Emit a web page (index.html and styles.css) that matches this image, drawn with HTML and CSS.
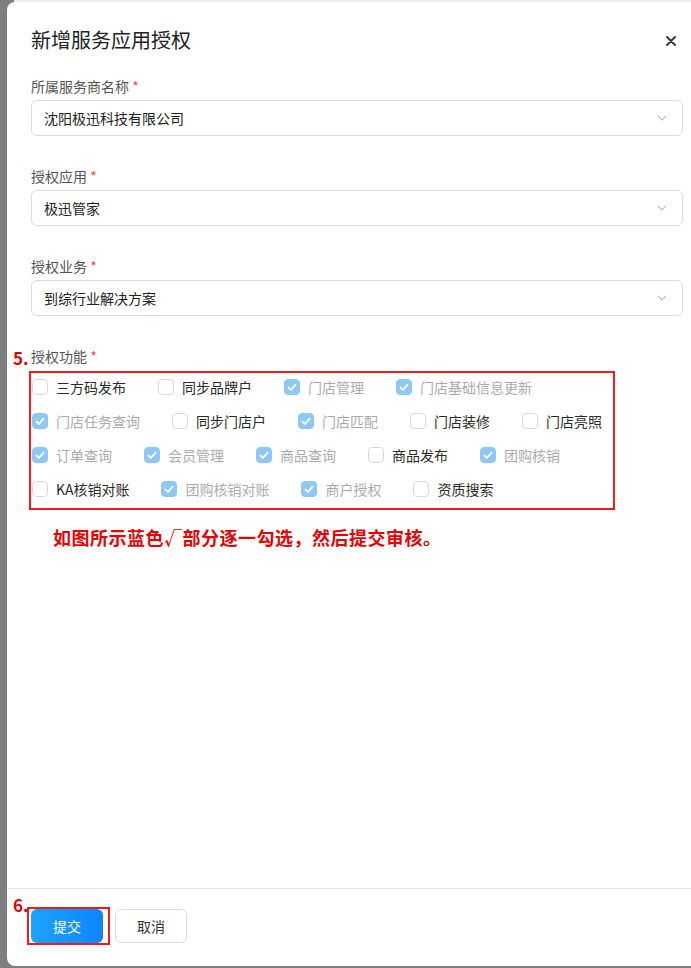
FILE: index.html
```html
<!DOCTYPE html>
<html lang="zh-CN">
<head>
<meta charset="utf-8">
<title>新增服务应用授权</title>
<link rel="stylesheet" href="styles.css">
</head>
<body>
<div class="modal">
  <div class="modal-header">
    <div class="modal-title">新增服务应用授权</div>
    <svg class="close" viewBox="0 0 10 10" width="10" height="10"><path d="M1 1L9 9M9 1L1 9" stroke="#333" stroke-width="1.8" stroke-linecap="round"/></svg>
  </div>
  <div class="modal-body">
    <div class="form-item">
      <div class="form-label">所属服务商名称 <span class="req">*</span></div>
      <div class="select"><span>沈阳极迅科技有限公司</span><svg class="chev" viewBox="0 0 10 6" width="10" height="6"><path d="M1 1L5 5L9 1" fill="none" stroke="#c0c0c0" stroke-width="1.1"/></svg></div>
    </div>
    <div class="form-item">
      <div class="form-label">授权应用 <span class="req">*</span></div>
      <div class="select"><span>极迅管家</span><svg class="chev" viewBox="0 0 10 6" width="10" height="6"><path d="M1 1L5 5L9 1" fill="none" stroke="#c0c0c0" stroke-width="1.1"/></svg></div>
    </div>
    <div class="form-item">
      <div class="form-label">授权业务 <span class="req">*</span></div>
      <div class="select"><span>到综行业解决方案</span><svg class="chev" viewBox="0 0 10 6" width="10" height="6"><path d="M1 1L5 5L9 1" fill="none" stroke="#c0c0c0" stroke-width="1.1"/></svg></div>
    </div>
    <div class="form-item group-item">
      <div class="form-label"><span class="mark mark5">5.</span>授权功能 <span class="req">*</span></div>
      <div class="check-box-area">
        <div class="checks">
          <label class="chk"><span class="box"></span>三方码发布</label>
          <label class="chk"><span class="box"></span>同步品牌户</label>
          <label class="chk on"><span class="box"><svg viewBox="0 0 16 16"><path d="M4 8.2L7 11L12 5.2" fill="none" stroke="#fff" stroke-width="1.8"/></svg></span>门店管理</label>
          <label class="chk on"><span class="box"><svg viewBox="0 0 16 16"><path d="M4 8.2L7 11L12 5.2" fill="none" stroke="#fff" stroke-width="1.8"/></svg></span>门店基础信息更新</label>
          <label class="chk on"><span class="box"><svg viewBox="0 0 16 16"><path d="M4 8.2L7 11L12 5.2" fill="none" stroke="#fff" stroke-width="1.8"/></svg></span>门店任务查询</label>
          <label class="chk"><span class="box"></span>同步门店户</label>
          <label class="chk on"><span class="box"><svg viewBox="0 0 16 16"><path d="M4 8.2L7 11L12 5.2" fill="none" stroke="#fff" stroke-width="1.8"/></svg></span>门店匹配</label>
          <label class="chk"><span class="box"></span>门店装修</label>
          <label class="chk"><span class="box"></span>门店亮照</label>
          <label class="chk on"><span class="box"><svg viewBox="0 0 16 16"><path d="M4 8.2L7 11L12 5.2" fill="none" stroke="#fff" stroke-width="1.8"/></svg></span>订单查询</label>
          <label class="chk on"><span class="box"><svg viewBox="0 0 16 16"><path d="M4 8.2L7 11L12 5.2" fill="none" stroke="#fff" stroke-width="1.8"/></svg></span>会员管理</label>
          <label class="chk on"><span class="box"><svg viewBox="0 0 16 16"><path d="M4 8.2L7 11L12 5.2" fill="none" stroke="#fff" stroke-width="1.8"/></svg></span>商品查询</label>
          <label class="chk"><span class="box"></span>商品发布</label>
          <label class="chk on"><span class="box"><svg viewBox="0 0 16 16"><path d="M4 8.2L7 11L12 5.2" fill="none" stroke="#fff" stroke-width="1.8"/></svg></span>团购核销</label>
          <label class="chk"><span class="box"></span>KA核销对账</label>
          <label class="chk on"><span class="box"><svg viewBox="0 0 16 16"><path d="M4 8.2L7 11L12 5.2" fill="none" stroke="#fff" stroke-width="1.8"/></svg></span>团购核销对账</label>
          <label class="chk on"><span class="box"><svg viewBox="0 0 16 16"><path d="M4 8.2L7 11L12 5.2" fill="none" stroke="#fff" stroke-width="1.8"/></svg></span>商户授权</label>
          <label class="chk"><span class="box"></span>资质搜索</label>
        </div>
      </div>
      <div class="note">如图所示蓝色√部分逐一勾选，然后提交审核。</div>
    </div>
  </div>
  <div class="modal-footer">
    <span class="mark mark6">6.</span>
    <div class="hl"><button class="btn primary">提交</button></div>
    <button class="btn">取消</button>
  </div>
</div>
</body>
</html>
```
FILE: styles.css
```css
html, body {
  margin: 0;
  padding: 0;
}
body {
  width: 691px;
  height: 968px;
  overflow: hidden;
  background: linear-gradient(#ececec, #ececec) no-repeat 14px 0 / 100% 2px, #7e7e7e;
  font-family: "Noto Sans CJK SC", "Noto Sans", sans-serif;
  color: #222;
}
.modal {
  margin: 2px 0 0 7px;
  height: 964px;
  background: #fff;
  border-radius: 8px 0 0 8px;
  display: flex;
  flex-direction: column;
  box-sizing: border-box;
}
.modal-header {
  display: flex;
  align-items: center;
  justify-content: space-between;
  padding: 24px 15px 0 24px;
  height: 52px;
  box-sizing: border-box;
}
.modal-title {
  font-size: 20px;
  line-height: 28px;
  color: #222;
}
.close {
  display: block;
  margin-top: 2px;
}
.modal-body {
  flex: 1;
  padding: 21px 8px 0 24px;
}
.form-item {
  margin-bottom: 29px;
}
.form-label {
  position: relative;
  font-size: 14px;
  line-height: 22px;
  color: #555;
  margin-bottom: 3px;
}
.req {
  color: #f04b4b;
}
.select {
  height: 36px;
  box-sizing: border-box;
  border: 1px solid #dcdcdc;
  border-radius: 6px;
  display: flex;
  align-items: center;
  justify-content: space-between;
  padding: 0 15px 0 12px;
  font-size: 14px;
  color: #222;
}
.chev {
  display: block;
}
.group-item .form-label {
  margin-bottom: 4px;
}
.mark {
  position: absolute;
  color: #e00000;
  font-weight: 700;
  font-size: 17px;
  line-height: 20px;
}
.mark5 {
  left: -18px;
  top: 3px;
}
.check-box-area {
  margin-left: -2px;
  width: 586px;
  box-sizing: border-box;
  border: 2px solid #ee1c1c;
  padding: 0 2px 5px 1px;
}
.checks {
  display: flex;
  flex-wrap: wrap;
  column-gap: 32px;
  row-gap: 6px;
}
.chk {
  display: flex;
  align-items: center;
  height: 28px;
  font-size: 14px;
  color: #2a2a2a;
}
.box {
  width: 16px;
  height: 16px;
  box-sizing: border-box;
  border: 1px solid #dadada;
  border-radius: 4px;
  margin-right: 8px;
  background: #fff;
  display: flex;
}
.box svg {
  width: 16px;
  height: 16px;
  margin: -1px;
}
.chk.on {
  color: #ababab;
}
.chk.on .box {
  background: #8dc8f6;
  border-color: #8dc8f6;
}
.note {
  margin: 15px 0 0 22px;
  font-size: 18px;
  line-height: 24px;
  font-weight: 700;
  color: #e60000;
  letter-spacing: 0.5px;
}
.modal-footer {
  position: relative;
  border-top: 1px solid #e6e6e6;
  padding: 18px 0 21px 20px;
  display: flex;
  align-items: center;
}
.mark6 {
  left: 6px;
  top: 6px;
}
.hl {
  border: 2px solid #ee1c1c;
  padding: 0 5px 0 2px;
  display: flex;
}
.btn {
  width: 72px;
  height: 34px;
  box-sizing: border-box;
  border: 1px solid #dcdcdc;
  border-radius: 6px;
  background: #fff;
  font-family: inherit;
  font-size: 14px;
  color: #333;
  margin-left: 5px;
  padding: 0;
}
.hl .btn {
  margin-left: 0;
}
.btn.primary {
  border: none;
  color: #fff;
  background: linear-gradient(90deg, #1ca3ff, #0d85ff);
}
```
